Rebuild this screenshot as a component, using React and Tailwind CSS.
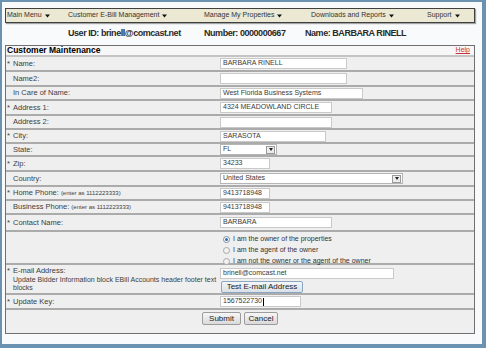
import React from 'react';

const Arrow = () => (
    <svg width="5" height="4" viewBox="0 0 5 4" className="ml-[3px] inline-block">
        <path d="M0 0.5 L5 0.5 L2.5 3.5 Z" fill="#111" />
    </svg>
);

function Input({ w, value, cursor }) {
    return (
        <div className={`flex h-[11px] items-center border border-[#c9c9c9] bg-white pl-[2px] text-[7px] text-[#3a3a3a] ${w}`}>
            {value}
            {cursor && <span className="ml-[1px] h-[8px] w-px bg-black"></span>}
        </div>
    );
}

function Select({ w, value }) {
    return (
        <div className={`flex h-[11px] items-center justify-between border border-[#b5b5b5] bg-white pl-[2px] text-[7px] text-[#3a3a3a] ${w}`}>
            <span>{value}</span>
            <span className="mr-px flex h-[8px] w-[9px] items-center justify-center border border-[#9a9a9a] bg-[#ececec]">
                <svg width="4" height="3" viewBox="0 0 4 3"><path d="M0 0 L4 0 L2 3 Z" fill="#222" /></svg>
            </span>
        </div>
    );
}

function Label({ req, children, hint }) {
    return (
        <div className="flex w-[214px] shrink-0 items-center pl-[1px] text-[7.5px] text-[#404040]">
            <span className="w-[6px] shrink-0">{req ? '*' : ''}</span>
            <span>{children}</span>
            {hint && <span className="ml-[2px] text-[6px]">{hint}</span>}
        </div>
    );
}

function Row({ h, children }) {
    return <div className={`flex items-center border-b-2 border-[#ababab] ${h}`}>{children}</div>;
}

function Radio({ checked, children }) {
    return (
        <div className="flex h-[11px] items-center text-[7px] text-[#333]">
            <span className={`ml-[3px] mr-[3px] flex h-[7px] w-[7px] items-center justify-center rounded-full border ${checked ? 'border-[#7f8d99] bg-white' : 'border-[#a8a8a8] bg-[#f2f2f2]'}`}>
                {checked && <span className="h-[3px] w-[3px] rounded-full bg-[#2a6db3]"></span>}
            </span>
            {children}
        </div>
    );
}

function Button({ w, children }) {
    return (
        <button className={`flex h-[13px] items-center justify-center rounded-[2px] border border-[#9c9c9c] bg-gradient-to-b from-[#f6f6f6] to-[#dadada] text-[8px] text-[#222] ${w}`}>
            {children}
        </button>
    );
}

export default function App() {
    return (
        <div className="h-[348px] w-[486px] overflow-hidden border-b-4 border-l-2 border-r-4 border-t-2 border-[#6b92b0] bg-[#f9fafb] font-['Liberation_Sans',Arial,sans-serif]">
            <div className="ml-[3px] mt-[6px] w-[470px]">
                {/* top menu */}
                <nav className="flex h-[15px] items-center border border-[#404040] bg-[#ebe8d4] pl-[1px] text-[7px] text-[#333] shadow-[1px_1px_1px_rgba(0,0,0,0.35)]">
                    <span className="flex w-[61px] items-center">Main Menu<Arrow /></span>
                    <span className="flex w-[136px] items-center">Customer E-Bill Management<Arrow /></span>
                    <span className="flex w-[107px] items-center">Manage My Properties<Arrow /></span>
                    <span className="flex w-[116px] items-center">Downloads and Reports<Arrow /></span>
                    <span className="flex items-center">Support<Arrow /></span>
                </nav>

                {/* account header */}
                <div className="flex h-[22px] items-center whitespace-nowrap pl-[63px] text-[9px] font-bold tracking-[-0.45px] text-[#2a2a2a]">
                    <span className="w-[136px]">User ID: brinell@comcast.net</span>
                    <span className="w-[101px]">Number: 0000000667</span>
                    <span>Name: BARBARA RINELL</span>
                </div>

                {/* form table */}
                <div className="border border-[#707070] bg-[#efefef]">
                    <div className="flex h-[11px] items-center justify-between border-b-2 border-[#c4c4c4] bg-[#f7f7f7] pl-[1px] pr-[4px]">
                        <span className="text-[8.5px] font-bold text-black">Customer Maintenance</span>
                        <span className="text-[7px] text-[#c8323a] underline">Help</span>
                    </div>

                    <Row h="h-[15px]"><Label req>Name:</Label><Input w="w-[127px]" value="BARBARA RINELL" /></Row>
                    <Row h="h-[15px]"><Label>Name2:</Label><Input w="w-[127px]" value="" /></Row>
                    <Row h="h-[14px]"><Label>In Care of Name:</Label><Input w="w-[143px]" value="West Florida Business Systems" /></Row>
                    <Row h="h-[15px]"><Label req>Address 1:</Label><Input w="w-[112px]" value="4324 MEADOWLAND CIRCLE" /></Row>
                    <Row h="h-[14px]"><Label>Address 2:</Label><Input w="w-[112px]" value="" /></Row>
                    <Row h="h-[14px]"><Label req>City:</Label><Input w="w-[106px]" value="SARASOTA" /></Row>
                    <Row h="h-[13px]"><Label>State:</Label><Select w="w-[57px]" value="FL" /></Row>
                    <Row h="h-[15px]"><Label req>Zip:</Label><Input w="w-[50px]" value="34233" /></Row>
                    <Row h="h-[15px]"><Label>Country:</Label><Select w="w-[183px]" value="United States" /></Row>
                    <Row h="h-[14px]"><Label req hint="(enter as 1112223333)">Home Phone:</Label><Input w="w-[50px]" value="9413718948" /></Row>
                    <Row h="h-[14px]"><Label hint="(enter as 1112223333)">Business Phone:</Label><Input w="w-[50px]" value="9413718948" /></Row>
                    <Row h="h-[17px]"><Label req>Contact Name:</Label><Input w="w-[112px]" value="BARBARA" /></Row>

                    <div className="flex h-[33px] border-b-2 border-[#ababab]">
                        <div className="w-[214px] shrink-0"></div>
                        <div className="pt-[2px]">
                            <Radio checked>I am the owner of the properties</Radio>
                            <Radio>I am the agent of the owner</Radio>
                            <Radio>I am not the owner or the agent of the owner</Radio>
                        </div>
                    </div>

                    <div className="flex h-[30px] border-b-2 border-[#ababab]">
                        <div className="w-[214px] shrink-0 pl-[1px] pt-[2px] text-[7.5px] leading-[8.5px] text-[#404040]">
                            <div className="flex"><span className="w-[6px] shrink-0">*</span>E-mail Address:</div>
                            <div className="pl-[6px] text-[7px] leading-[8.5px]">Update Bidder Information block EBill Accounts header footer text blocks</div>
                        </div>
                        <div className="flex flex-col gap-[2px] pt-[3px]">
                            <Input w="w-[174px]" value="brinell@comcast.net" />
                            <button className="ml-px flex h-[12px] w-[82px] items-center justify-center rounded-[2px] border border-[#8aa6c1] bg-gradient-to-b from-[#f4f7fa] to-[#d9e0e7] text-[8px] text-[#222]">
                                Test E-mail Address
                            </button>
                        </div>
                    </div>

                    <Row h="h-[15px]"><Label req>Update Key:</Label><Input w="w-[81px]" value="1567522730" cursor /></Row>

                    <div className="flex h-[23px] items-start justify-center gap-[3px] pt-[2px]">
                        <Button w="w-[39px]">Submit</Button>
                        <Button w="w-[34px]">Cancel</Button>
                    </div>
                </div>
            </div>
        </div>
    );
}
